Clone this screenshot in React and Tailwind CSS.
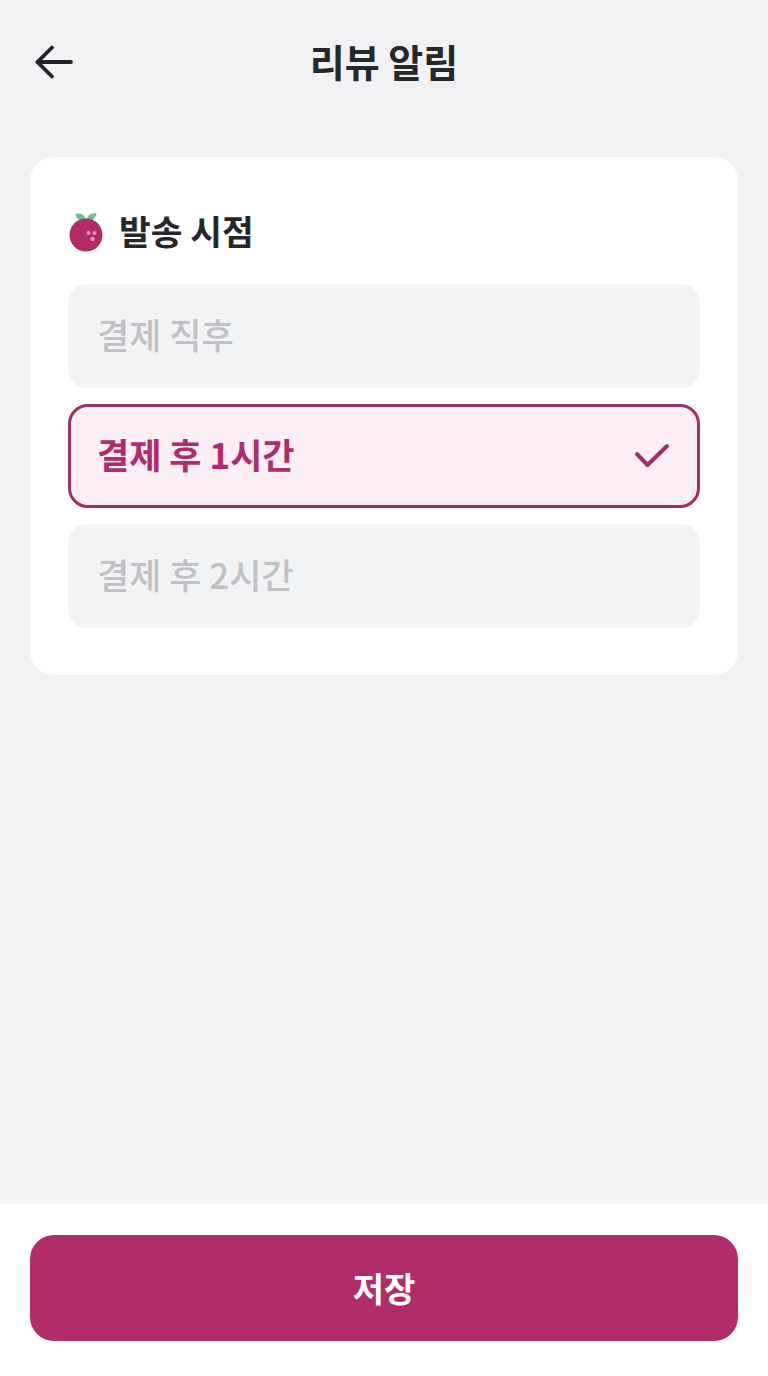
const FONT = '[font-family:"Noto_Sans_CJK_KR",sans-serif]';

const options = [
  { label: '결제 직후', selected: false },
  { label: '결제 후 1시간', selected: true },
  { label: '결제 후 2시간', selected: false },
];

const BackIcon = () => (
  <svg width="40" height="36" viewBox="0 0 40 36" fill="none" stroke="currentColor" strokeWidth="3.8" strokeLinecap="round" strokeLinejoin="round">
    <path d="M3.5 17 H37" />
    <path d="M18 2.5 L3.5 17 L18 31.5" />
  </svg>
);

const CheckIcon = () => (
  <svg width="36" height="28" viewBox="0 0 36 28" fill="none" stroke="#9c2f63" strokeWidth="4" strokeLinecap="round" strokeLinejoin="round">
    <path d="M3 12 L13.5 23 L33 4" />
  </svg>
);

const BerryIcon = () => (
  <svg width="36" height="42" viewBox="0 0 36 42" className="shrink-0">
    <path d="M18 10.5 C13 11 8 8 7.5 3 C12 1 18 4 18 10.5 Z" fill="#6fbf9b" />
    <path d="M18 10.5 C18.5 5 23 1.5 28.5 2.5 C28 7.5 23 11 18 10.5 Z" fill="#6fbf9b" />
    <circle cx="18" cy="24" r="16.5" fill="#b02a66" />
    <circle cx="20.5" cy="22" r="2" fill="#f58fbc" />
    <circle cx="26.5" cy="22" r="2" fill="#f58fbc" />
    <circle cx="24.5" cy="28" r="2.2" fill="#f58fbc" />
  </svg>
);

const OptionRow = ({ label, selected }) => {
  if (selected) {
    return (
      <div className="flex h-[104px] items-center justify-between rounded-[20px] border-[3px] border-[#9c2f63] bg-[#fceef5] pl-[26px] pr-[27px]">
        <span className="pb-[3px] text-[35px] font-bold text-[#ad2c69]">{label}</span>
        <CheckIcon />
      </div>
    );
  }
  return (
    <div className="flex h-[104px] items-center rounded-[20px] bg-[#f2f3f5] pl-[29px]">
      <span className="pb-[3px] text-[35px] font-medium text-[#bfc1c4]">{label}</span>
    </div>
  );
};

export default function App() {
  return (
    <div className={`flex h-[1376px] w-[768px] flex-col bg-[#f2f2f4] ${FONT}`}>
      <header className="relative flex h-[126px] shrink-0 items-center justify-center pb-[6px]">
        <button className="absolute left-[34px] top-[45px] text-[#222326]">
          <BackIcon />
        </button>
        <h1 className="text-[38px] font-bold text-[#26272b]">리뷰 알림</h1>
      </header>

      <main className="flex-1 px-[30px] pt-[31px]">
        <section className="rounded-[24px] bg-white px-[38px] pb-[47px] pt-[52px]">
          <div className="mb-[29px] flex h-[46px] items-center gap-[15px]">
            <BerryIcon />
            <h2 className="pb-[2px] text-[34.5px] font-bold text-[#26272b]">발송 시점</h2>
          </div>
          <div className="flex flex-col gap-[16px]">
            {options.map((option) => (
              <OptionRow key={option.label} label={option.label} selected={option.selected} />
            ))}
          </div>
        </section>
      </main>

      <footer className="shrink-0 bg-white px-[30px] pb-[35px] pt-[31px]">
        <button className="h-[106px] w-full rounded-[24px] bg-[#b02d6a] pb-[2px] text-[34px] font-bold text-white">
          저장
        </button>
      </footer>
    </div>
  );
}
